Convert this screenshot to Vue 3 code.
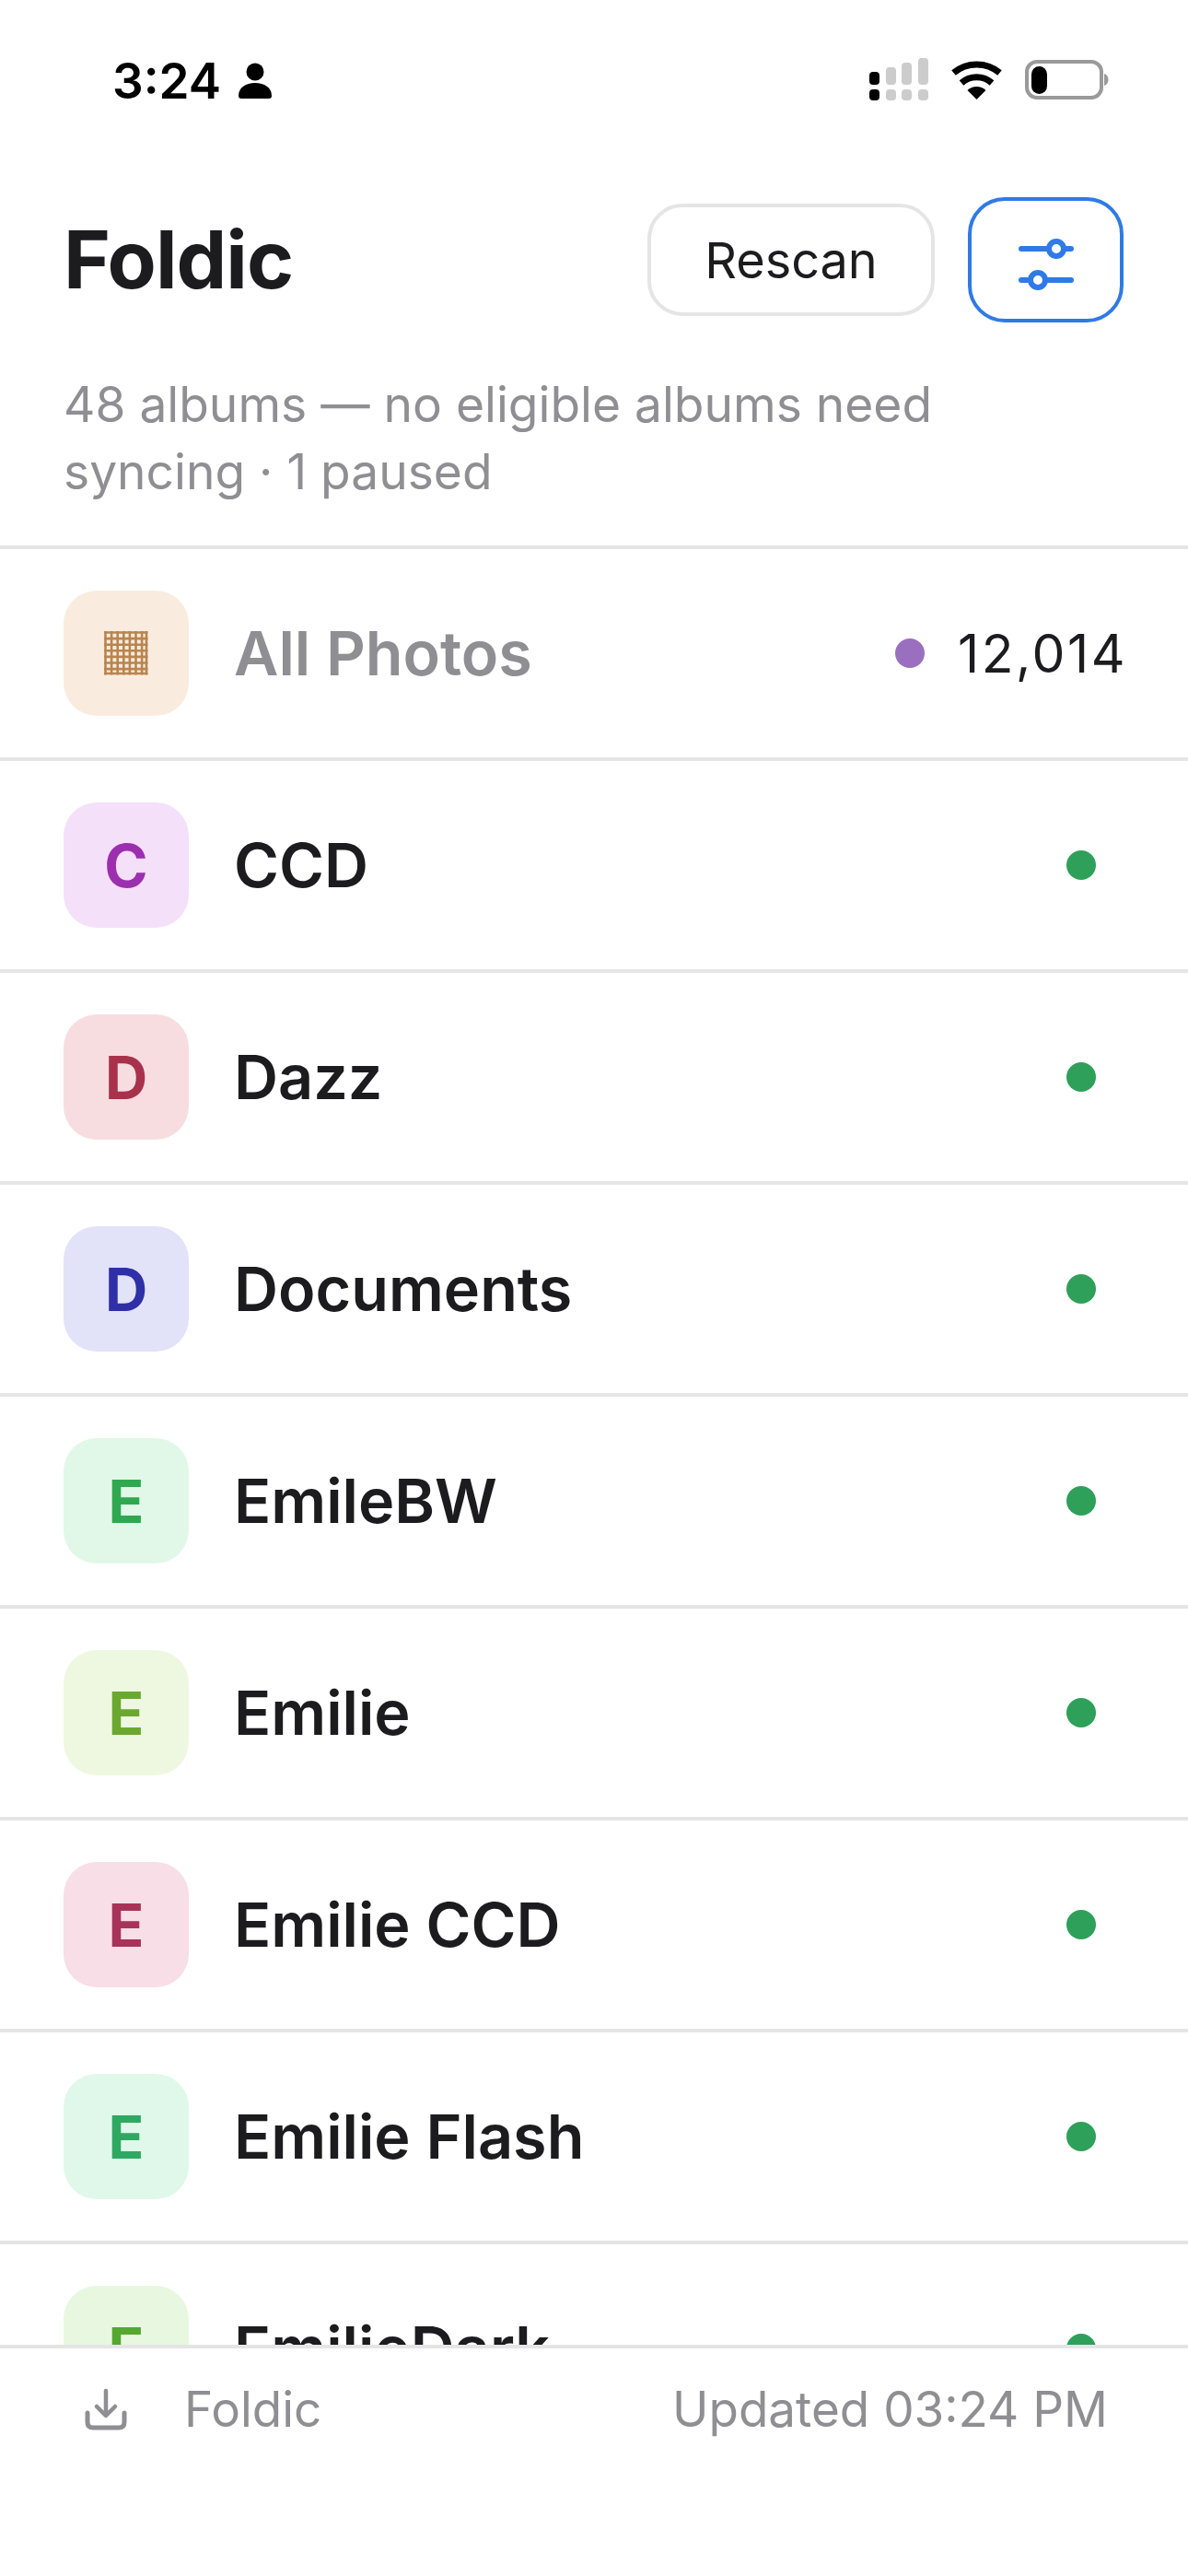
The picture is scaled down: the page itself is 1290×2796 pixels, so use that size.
<script setup>
const albums = [
  { name: 'CCD', letter: 'C', bg: '#f5e0f9', fg: '#9c2fae' },
  { name: 'Dazz', letter: 'D', bg: '#f8dde0', fg: '#a8324c' },
  { name: 'Documents', letter: 'D', bg: '#e2e2f9', fg: '#2f2fa8' },
  { name: 'EmileBW', letter: 'E', bg: '#e1f8e8', fg: '#2fa84f' },
  { name: 'Emilie', letter: 'E', bg: '#eef8e1', fg: '#6ba82f' },
  { name: 'Emilie CCD', letter: 'E', bg: '#f8dee6', fg: '#a83259' },
  { name: 'Emilie Flash', letter: 'E', bg: '#e0f8ea', fg: '#2fa862' },
  { name: 'EmilieDark', letter: 'E', bg: '#e8f8e0', fg: '#54a82f' }
]
const gridLines = [1.5, 8.1, 14.7, 21.3, 27.9, 34.5, 41.1, 46]
</script>

<template>
  <div class="page">
    <div class="status">
      <div class="status-left">
        <span class="time">3:24</span>
        <svg class="person" viewBox="0 0 38 40" aria-hidden="true">
          <circle cx="19" cy="10" r="9.5" fill="#000" />
          <path d="M1 36c0-9 8-14 18-14s18 5 18 14c0 2-1 3-3 3H4c-2 0-3-1-3-3z" fill="#000" />
        </svg>
      </div>
      <svg class="status-icons" viewBox="940 60 266 52" aria-hidden="true">
        <g fill="#000">
          <rect x="944" y="78" width="11" height="14" rx="4" />
          <rect x="944" y="97" width="11" height="12" rx="4" />
        </g>
        <g fill="#cccccc">
          <rect x="962" y="73" width="11" height="19" rx="4" />
          <rect x="962" y="97" width="11" height="12" rx="4" />
          <rect x="979" y="68" width="11" height="24" rx="4" />
          <rect x="979" y="97" width="11" height="12" rx="4" />
          <rect x="997" y="63" width="11" height="29" rx="4" />
          <rect x="997" y="97" width="11" height="12" rx="4" />
        </g>
        <g fill="none" stroke="#000" stroke-width="7">
          <path d="M1035.5 79a39 39 0 0 1 50 0" />
          <path d="M1044 90a25 25 0 0 1 33 0" />
        </g>
        <path d="M1060.5 108l-10-10a14.5 14.5 0 0 1 20 0z" fill="#000" />
        <rect x="1115" y="67" width="81" height="39" rx="11" fill="none" stroke="#9a9a9a" stroke-width="4" />
        <rect x="1120" y="72" width="17" height="30" rx="8.5" fill="#000" />
        <path d="M1199 80c3 1 4.500 3.500 4.500 6.500s-1.500 5.500-4.500 6.500z" fill="#9a9a9a" />
      </svg>
    </div>

    <header class="header">
      <div class="title-row">
        <h1 class="title">Foldic</h1>
        <div class="actions">
          <button class="rescan">Rescan</button>
          <button class="filter" aria-label="Filter">
            <svg viewBox="0 0 66 58" class="filter-icon" aria-hidden="true">
              <g stroke="#2f7ae5" stroke-width="6" stroke-linecap="round" fill="none">
                <path d="M6 12h32M54 12h6M6 46h6M28 46h32" />
              </g>
              <g stroke="#2f7ae5" stroke-width="6" fill="#fff">
                <circle cx="44" cy="12" r="8" />
                <circle cx="24" cy="46" r="8" />
              </g>
            </svg>
          </button>
        </div>
      </div>
      <p class="subtitle">48 albums — no eligible albums need<br />syncing · 1 paused</p>
    </header>

    <main class="list">
      <div class="row">
        <div class="tile tile-all">
          <svg class="grid-icon" viewBox="0 0 47.500 47.500" aria-hidden="true">
            <g stroke="#b9854f" stroke-width="2.600">
              <path v-for="p in gridLines" :key="'v' + p" :d="`M${p} 0V47.500`" />
              <path v-for="p in gridLines" :key="'h' + p" :d="`M0 ${p}H47.500`" />
            </g>
          </svg>
        </div>
        <span class="name name-muted">All Photos</span>
        <span class="dot dot-purple"></span>
        <span class="count">12,014</span>
      </div>
      <div v-for="a in albums" :key="a.name" class="row">
        <div class="tile" :style="{ background: a.bg, color: a.fg }">{{ a.letter }}</div>
        <span class="name">{{ a.name }}</span>
        <span class="dot dot-green"></span>
      </div>
    </main>

    <footer class="footer">
      <div class="footer-left">
        <svg class="download" viewBox="0 0 46 46" aria-hidden="true">
          <g fill="none" stroke="#8e8e93" stroke-width="4.500" stroke-linecap="round" stroke-linejoin="round">
            <path d="M23 3v26M13 20l10 10 10-10" />
            <path d="M3 27v10c0 4 2 6 6 6h28c4 0 6-2 6-6V27" stroke-width="5" />
          </g>
        </svg>
        <span>Foldic</span>
      </div>
      <span>Updated 03:24 PM</span>
    </footer>
  </div>
</template>

<style>
html, body { margin: 0; background: #fff; }
</style>

<style scoped>
.page {
  width: 1290px;
  height: 2796px;
  display: flex;
  flex-direction: column;
  background: #fff;
  color: #1c1c1e;
  font-family: Inter, "Liberation Sans", sans-serif;
  overflow: hidden;
}
.status {
  height: 172px;
  flex: none;
  box-sizing: border-box;
  padding: 58px 84px 0 122px;
  display: flex;
  justify-content: space-between;
  align-items: flex-start;
}
.status-left { display: flex; align-items: center; gap: 18px; }
.time { font-size: 53px; font-weight: 600; line-height: 60px; color: #000; }
.person { width: 38px; height: 40px; }
.status-icons { width: 266px; height: 52px; margin-top: 2px; }
.header { padding: 42px 70px 0 69px; flex: none; }
.title-row { display: flex; justify-content: space-between; align-items: center; }
.title { margin: 0; font-size: 87px; font-weight: 700; line-height: 100px; letter-spacing: -1px; }
.actions { display: flex; align-items: center; gap: 36px; }
.rescan {
  width: 312px;
  height: 122px;
  box-sizing: border-box;
  background: #fff;
  border: 4px solid #e5e5e5;
  border-radius: 38px;
  font: 400 54px Inter, sans-serif;
  color: #1c1c1e;
  padding: 0;
}
.filter {
  width: 169px;
  height: 136px;
  box-sizing: border-box;
  background: #fff;
  border: 4px solid #2f7ae5;
  border-radius: 40px;
  padding: 0;
  display: flex;
  align-items: center;
  justify-content: center;
}
.filter-icon { width: 66px; height: 58px; margin-top: 10px; }
.subtitle {
  margin: 52px 0 0;
  padding-bottom: 44px;
  font-size: 53.300px;
  line-height: 73px;
  color: #8e8e93;
}
.list { flex: 1; min-height: 0; overflow: hidden; }
.row {
  height: 230px;
  box-sizing: border-box;
  border-top: 4px solid #e5e5e5;
  display: flex;
  align-items: center;
  padding: 0 70px 0 69px;
}
.tile {
  width: 136px;
  height: 136px;
  flex: none;
  border-radius: 36px;
  display: flex;
  align-items: center;
  justify-content: center;
  font-size: 64px;
  font-weight: 700;
}
.tile-all { background: #f9ecdf; }
.grid-icon { width: 47.500px; height: 47.500px; }
.name { margin-left: 49px; flex: 1; font-size: 66.500px; font-weight: 600; }
.name-muted { color: #8e8e93; }
.dot { width: 32px; height: 32px; border-radius: 50%; flex: none; }
.dot-green { background: #2ea05a; margin-right: 30px; }
.dot-purple { background: #9a6fc0; margin-right: 36px; }
.count { font-size: 57px; letter-spacing: 2.500px; color: #1c1c1e; margin-right: -4px; }
.footer {
  height: 251px;
  flex: none;
  box-sizing: border-box;
  border-top: 4px solid #e5e5e5;
  padding: 35px 87px 0 92px;
  display: flex;
  justify-content: space-between;
  align-items: flex-start;
  color: #8e8e93;
  font-size: 53px;
  line-height: 62px;
}
.footer-left { display: flex; align-items: center; gap: 62px; }
.download { width: 46px; height: 46px; }
</style>
